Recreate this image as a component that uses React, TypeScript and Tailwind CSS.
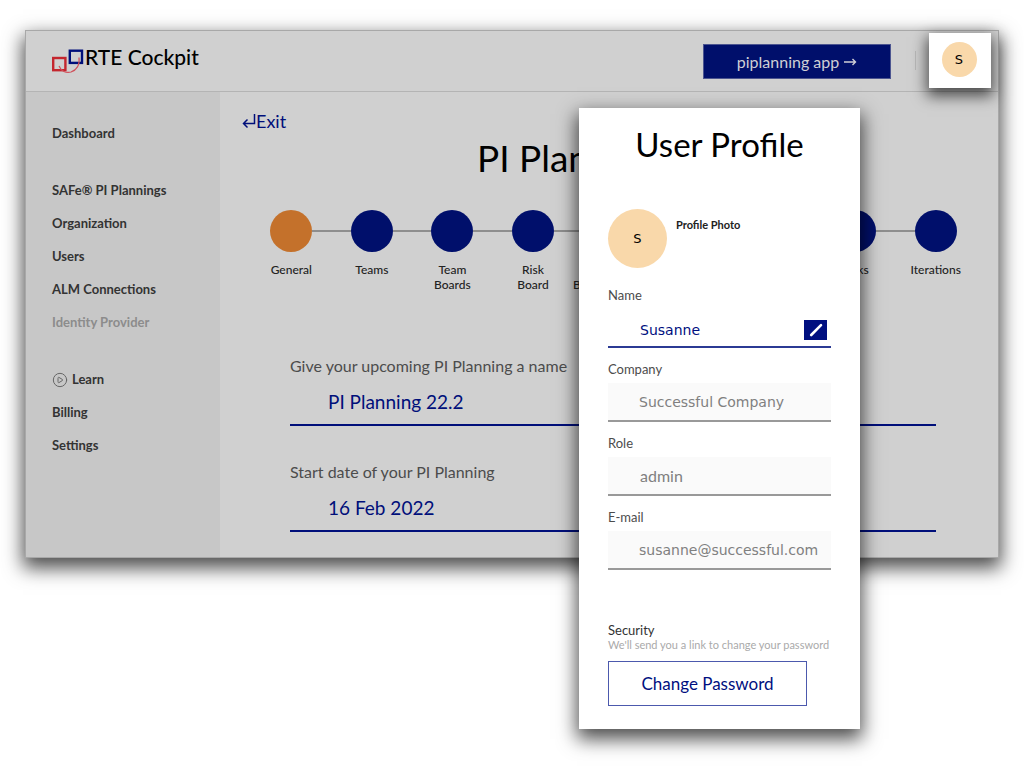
import { CirclePlay } from "lucide-react";

const navGroups = [
  [{ label: "Dashboard" }],
  [
    { label: "SAFe® PI Plannings" },
    { label: "Organization" },
    { label: "Users" },
    { label: "ALM Connections" },
    { label: "Identity Provider", disabled: true },
  ],
  [{ label: "Learn", icon: true }, { label: "Billing" }, { label: "Settings" }],
];

const steps = [
  "General",
  "Teams",
  "Team Boards",
  "Risk Board",
  "Program Board\u00a0Mapping",
  "Sync",
  "Goals",
  "Links",
  "Iterations",
];

const planningFields = [
  { id: "pi-name", label: "Give your upcoming PI Planning a name", value: "PI Planning 22.2" },
  { id: "pi-start", label: "Start date of your PI Planning", value: "16 Feb 2022" },
];

const profileFields = [
  { id: "company", label: "Company", value: "Successful Company" },
  { id: "role", label: "Role", value: "admin", plain: true },
  { id: "email", label: "E-mail", value: "susanne@successful.com" },
];

function Logo() {
  return (
    <svg className="mt-0.5" width="33" height="27" viewBox="0 0 33 27" fill="none">
      <rect x="1.200" y="11" width="12.200" height="12.200" stroke="#c4262e" strokeWidth="2.400" />
      <rect x="17.800" y="3.700" width="12.200" height="12.200" stroke="#000f7a" strokeWidth="2.400" />
      <path d="M7 19c2 5 7 7.500 12 6 5.500-1.800 9-7 8-14.500" stroke="#d0505a" strokeWidth="1.200" />
    </svg>
  );
}

function Header() {
  return (
    <header className="flex h-[61px] items-start border-b border-[#b4b4b4] pr-[7px] pl-[26px]">
      <a href="#" className="flex pt-[14px] text-[21px] leading-6 font-medium text-black">
        <Logo />
        RTE Cockpit
      </a>
      <button className="mt-[13px] ml-auto flex h-[35px] w-[188px] items-center justify-center gap-[5px] border border-[#4c5590] bg-[#000f6b] text-base text-[#cfcfd6]">
        piplanning app
        <svg width="13" height="10" viewBox="0 0 13 10" fill="none" stroke="currentColor" strokeWidth="1.400">
          <path d="M0 5h11.500M8.500 2l3 3-3 3" />
        </svg>
      </button>
      <span className="mt-5 ml-6 h-[19px] w-px bg-[#b8b8b8]" />
      <button className="mt-[2px] ml-[13px] flex h-[55px] w-[62px] items-center justify-center bg-white pr-0.5 pb-0.5 shadow-[0_6px_14px_2px_rgba(0,0,0,0.65)]">
        <span className="flex size-[35px] items-center justify-center rounded-full bg-[#f9d8aa] font-['DejaVu_Sans',sans-serif] text-[13px] text-black">
          S
        </span>
      </button>
    </header>
  );
}

function Sidebar() {
  return (
    <nav className="flex w-[194px] shrink-0 flex-col gap-6 bg-[#c7c7c7] pt-[25px] pl-[26px] text-[13px] font-bold text-[#333]">
      {navGroups.map((group) => (
        <ul key={group[0].label}>
          {group.map((item) => (
            <li key={item.label} className="flex h-[33px] items-center">
              <a href="#" className={item.disabled ? "text-[#8c8c8c]" : "flex items-center gap-1"}>
                {item.icon && <CirclePlay size={16} strokeWidth={1.5} className="text-[#666]" />}
                {item.label}
              </a>
            </li>
          ))}
        </ul>
      ))}
    </nav>
  );
}

function Stepper() {
  return (
    <ol className="mt-8 grid grid-cols-9 pr-[22px] pl-[31px]">
      {steps.map((step, i) => (
        <li key={step} className="flex flex-col items-center">
          <div className="flex w-full items-center">
            <span className={i === 0 ? "h-0.5 flex-1" : "h-0.5 flex-1 bg-[#8e8e8e]"} />
            <span className={i === 0 ? "size-[42px] rounded-full bg-[#c4712b]" : "size-[42px] rounded-full bg-[#000f6b]"} />
            <span className={i === steps.length - 1 ? "h-0.5 flex-1" : "h-0.5 flex-1 bg-[#8e8e8e]"} />
          </div>
          <span className="mt-2.5 w-min text-center text-xs leading-[15px] font-medium text-[#222]">{step}</span>
        </li>
      ))}
    </ol>
  );
}

function Planning() {
  return (
    <main className="min-w-0 flex-1 pt-[19px] pb-[25px]">
      <a href="#" className="ml-[22px] flex w-max items-center text-lg leading-5 text-[#000f7a]">
        <svg width="14" height="16" viewBox="0 0 14 16" fill="none" stroke="currentColor" strokeWidth="1.500">
          <path d="M12.500 1v9.500H1.500M5.500 6.500l-4 4 4 4" />
        </svg>
        Exit
      </a>
      <h1 className="mt-[7px] text-center text-[37px] leading-10 text-black">PI Planning 22.2</h1>
      <Stepper />
      <form className="mt-16 flex flex-col gap-9 pr-[62px] pl-[70px]">
        {planningFields.map((field) => (
          <div key={field.id} className="flex flex-col">
            <label htmlFor={field.id} className="text-base leading-5 text-[#4c4c4c]">
              {field.label}
            </label>
            <input
              id={field.id}
              defaultValue={field.value}
              className="h-[50px] border-b-2 border-[#000f7a] pt-0.5 pl-[38px] text-[19px] text-[#000f7a] outline-none"
            />
          </div>
        ))}
      </form>
    </main>
  );
}

function UserProfile() {
  return (
    <section
      role="dialog"
      aria-labelledby="profile-title"
      className="absolute top-[108px] right-[164px] w-[281px] bg-white px-[29px] pt-4 pb-[23px] shadow-[0_8px_18px_2px_rgba(0,0,0,0.7)]"
    >
      <h2 id="profile-title" className="text-center text-[33px] leading-10 text-black">
        User Profile
      </h2>
      <div className="mt-[45px] flex gap-[9px]">
        <span className="flex size-[59px] items-center justify-center rounded-full bg-[#f9d8aa] font-['DejaVu_Sans',sans-serif] text-[13px] text-black">
          S
        </span>
        <h3 className="pt-2 text-[11px] leading-4 font-bold text-[#222]">Profile Photo</h3>
      </div>
      <form className="mt-[19px]">
        <div className="flex flex-col gap-[13px]">
          <div className="flex flex-col gap-1.5">
            <label htmlFor="name" className="text-[13px] leading-4 text-[#4c4c4c]">
              Name
            </label>
            <div className="flex h-[39px] items-center border-b-2 border-[#2b3a94] pt-1 pr-1">
              <input
                id="name"
                defaultValue="Susanne"
                className="min-w-0 flex-1 pl-8 font-['DejaVu_Sans',sans-serif] text-sm text-[#000f80] outline-none"
              />
              <button type="button" aria-label="Edit name" className="flex h-5 w-[23px] items-center justify-center bg-[#000f80]">
                <svg width="14" height="14" viewBox="0 0 14 14" fill="none" stroke="#fff" strokeLinecap="round">
                  <path d="M2.200 12 12 2.200" strokeWidth="2.600" />
                </svg>
              </button>
            </div>
          </div>
          {profileFields.map((field) => (
            <div key={field.id} className="flex flex-col gap-1.5">
              <label htmlFor={field.id} className="text-[13px] leading-4 text-[#4c4c4c]">
                {field.label}
              </label>
              <input
                id={field.id}
                value={field.value}
                readOnly
                className={
                  field.plain
                    ? "h-[39px] border-b-2 border-[#999] bg-[#fafafa] pl-8 text-base text-[#808080] outline-none"
                    : "h-[39px] border-b-2 border-[#999] bg-[#fafafa] pl-[31px] font-['DejaVu_Sans',sans-serif] text-sm text-[#808080] outline-none"
                }
              />
            </div>
          ))}
        </div>
        <h3 className="mt-[52px] text-[13px] leading-4 text-[#333]">Security</h3>
        <p className="text-[11px] leading-[14px] whitespace-nowrap text-[#aaa]">
          We'll send you a link to change your password
        </p>
        <button type="button" className="mt-[9px] h-[45px] w-[199px] border border-[#4c59ad] text-[17px] text-[#000f80]">
          Change Password
        </button>
      </form>
    </section>
  );
}

function App() {
  return (
    <div className="relative min-h-screen bg-white pt-[30px] pr-[25px] pb-10 pl-[25px] font-[Lato,sans-serif]">
      <div className="border border-[#a8a8a8] bg-[#d0d0d0] shadow-[0_8px_18px_2px_rgba(0,0,0,0.7)]">
        <Header />
        <div className="flex">
          <Sidebar />
          <Planning />
        </div>
      </div>
      <UserProfile />
    </div>
  );
}

export default App;
